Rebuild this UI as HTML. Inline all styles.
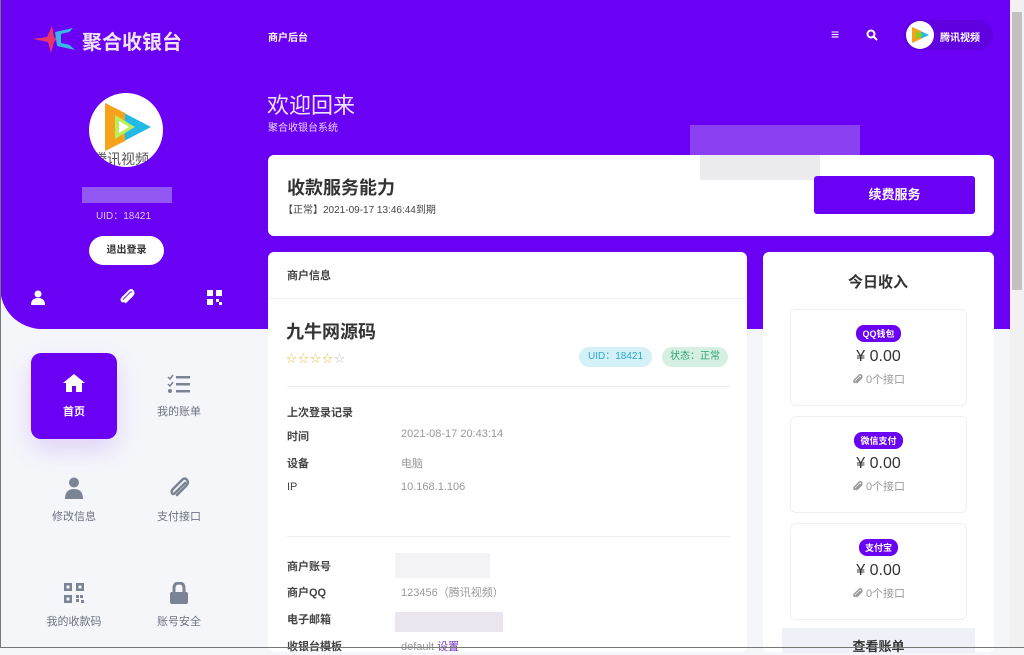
<!DOCTYPE html>
<html><head><meta charset="utf-8"><style>
*{margin:0;padding:0;box-sizing:border-box}
body{width:1024px;height:648px;overflow:hidden;background:#f5f6fa;font-family:"Liberation Sans","Noto Sans CJK SC",sans-serif;position:relative;color:#333}
.a{position:absolute}
.purple{left:0;top:0;width:1010px;height:329px;background:#6a00f4;border-bottom-left-radius:42px}
.card{background:#fff;border-radius:6px}
.t{position:absolute;white-space:nowrap}
.menu .lbl{font-size:11px;color:#6b7280;width:90px;text-align:center}
.inc{position:absolute;left:790px;width:177px;height:97px;background:#fff;border:1px solid #f0f0f3;border-radius:6px;text-align:center}
.inc .b{display:inline-block;margin-top:15px;background:#6a00f4;color:#fff;font-size:9px;padding:2px 6px;border-radius:8px;font-weight:bold}
.inc .m{font-size:16px;color:#333;margin-top:6px}
.inc .n{font-size:11px;color:#999;margin-top:5px}
.inc .n svg{vertical-align:-2px;margin-right:3px}
.lab{font-size:11px;color:#444;font-weight:bold}
.val{font-size:11px;color:#999}
</style></head><body>
<div class="a purple"></div>
<svg class="a" style="left:33px;top:26px" width="44" height="28" viewBox="0 0 44 28"><path d="M0 13 L14 11 L19 0 L21 11 L24 13 L21 16 L18 27 L15 16 Z" fill="#e8356b"/><path d="M22 6 L40 2 L30 13 L42 24 L24 20 Z" fill="#38b6e8"/><path d="M28 8 L36 6 L31 13 L37 19 L28 17 Z" fill="#6a00f4"/></svg>
<div class="t" style="left:82px;top:26px;font-size:20px;color:#efe3f7;font-weight:bold">聚合收银台</div>
<div class="t" style="left:268px;top:29px;font-size:10px;color:#fff;font-weight:bold">商户后台</div>
<div class="t" style="left:831px;top:26px;font-size:14px;color:#fff;font-weight:bold">≡</div>
<svg class="a" style="left:866px;top:29px" width="12" height="12" viewBox="0 0 12 12"><circle cx="5" cy="5" r="3.5" stroke="#fff" stroke-width="2" fill="none"/><path d="M7.5 7.5L11 11" stroke="#fff" stroke-width="2"/></svg>
<div class="a" style="left:903px;top:20px;width:90px;height:30px;border-radius:15px;background:#6000e0"></div>
<div class="a" style="left:906px;top:21px;width:28px;height:28px;border-radius:50%;background:#fff"></div>
<svg class="a" style="left:909px;top:24px" width="22" height="22" viewBox="0 0 22 22"><path d="M3 3 L20 11 L3 19Z" fill="#22b8e8"/><path d="M3 3 L12 7 L12 15 L3 19Z" fill="#f7a21b"/><path d="M7 7 L14 11 L7 15Z" fill="#7ed321"/></svg>
<div class="t" style="left:940px;top:29px;font-size:10px;color:#fff;font-weight:bold">腾讯视频</div>
<div class="a" style="left:89px;top:93px;width:74px;height:74px;border-radius:50%;background:#fff;overflow:hidden">
<svg width="74" height="74" viewBox="0 0 74 74"><path d="M16 10 L62 34 L16 58Z" fill="#22b8e8"/><path d="M16 10 L36 20 L36 48 L16 58Z" fill="#f7a21b"/><path d="M26 22 L46 34 L26 46Z" fill="#b9f05a"/><path d="M30 28 L40 34 L30 40Z" fill="#fff"/></svg>
<div class="t" style="left:4px;top:56px;font-size:14px;color:#555">腾讯视频</div></div>
<div class="a" style="left:82px;top:187px;width:90px;height:16px;background:#9d6ef2;opacity:.8"></div>
<div class="t" style="left:96px;top:207px;font-size:10px;color:#d9c8fb">UID：18421</div>
<div class="a" style="left:89px;top:236px;width:75px;height:29px;border-radius:15px;background:#fff;font-size:10px;color:#333;text-align:center;line-height:29px;font-weight:bold">退出登录</div>
<svg class="a" style="left:31px;top:290px" width="14" height="15" viewBox="0 0 14 15"><circle cx="7" cy="4" r="3.5" fill="#fff"/><path d="M0 15 Q0 8 7 8 Q14 8 14 15Z" fill="#fff"/></svg>
<svg class="a" style="left:119px;top:289px" width="16" height="16" viewBox="0 0 22 22"><path d="M17 6 L7 16 Q5 18 4 16 Q3 14 5 12 L14 3 Q17 0 19 3 Q21 6 18 9 L9 18" stroke="#fff" stroke-width="3" fill="none" stroke-linecap="round"/></svg>
<svg class="a" style="left:207px;top:290px" width="15" height="15" viewBox="0 0 15 15" fill="#fff"><rect x="0" y="0" width="6" height="6"/><rect x="9" y="0" width="6" height="6"/><rect x="0" y="9" width="6" height="6"/><rect x="9" y="9" width="3" height="3"/><rect x="12" y="12" width="3" height="3"/></svg>
<div class="t" style="left:267px;top:88px;font-size:22px;color:#f1e6ff">欢迎回来</div>
<div class="t" style="left:268px;top:119px;font-size:10px;color:#e7d4ff">聚合收银台系统</div>
<div class="a" style="left:690px;top:125px;width:170px;height:30px;background:#9a5cf0;opacity:.7"></div>
<div class="a card" style="left:268px;top:155px;width:726px;height:81px"></div>
<div class="a" style="left:700px;top:155px;width:120px;height:25px;background:#ececef"></div>
<div class="t" style="left:287px;top:174px;font-size:18px;font-weight:bold;color:#333">收款服务能力</div>
<div class="t" style="left:283px;top:201px;font-size:10px;color:#444">【正常】2021-09-17 13:46:44到期</div>
<div class="a" style="left:814px;top:176px;width:161px;height:38px;background:#6a00f4;border-radius:3px;color:#fff;font-size:13px;text-align:center;line-height:38px;font-weight:bold">续费服务</div>
<div class="a card" style="left:268px;top:252px;width:479px;height:400px"></div>
<div class="t" style="left:287px;top:267px;font-size:11px;color:#444;font-weight:bold">商户信息</div>
<div class="a" style="left:268px;top:298px;width:479px;height:1px;background:#f0f0f0"></div>
<div class="t" style="left:286px;top:318px;font-size:18px;font-weight:bold;color:#333">九牛网源码</div>
<div class="t" style="left:286px;top:350px;font-size:11px;color:#e8c660;letter-spacing:1px">☆☆☆☆<span style="color:#ccc">☆</span></div>
<div class="a" style="left:579px;top:347px;width:73px;height:20px;border-radius:10px;background:#d3f1f7;color:#29a6c8;font-size:10px;text-align:center;line-height:20px">UID：18421</div>
<div class="a" style="left:662px;top:347px;width:66px;height:20px;border-radius:10px;background:#d5f0e3;color:#2fa46f;font-size:10px;text-align:center;line-height:20px">状态：正常</div>
<div class="a" style="left:287px;top:386px;width:443px;height:1px;background:#eee"></div>
<div class="t lab" style="left:287px;top:404px">上次登录记录</div>
<div class="t lab" style="left:287px;top:428px">时间</div><div class="t val" style="left:401px;top:428px">2021-08-17 20:43:14</div>
<div class="t lab" style="left:287px;top:455px">设备</div><div class="t val" style="left:401px;top:455px">电脑</div>
<div class="t lab" style="left:287px;top:481px;font-weight:normal">IP</div><div class="t val" style="left:401px;top:481px">10.168.1.106</div>
<div class="a" style="left:287px;top:536px;width:443px;height:1px;background:#eee"></div>
<div class="t lab" style="left:287px;top:558px">商户账号</div><div class="a" style="left:395px;top:553px;width:95px;height:25px;background:#f3f3f5"></div>
<div class="t lab" style="left:287px;top:584px">商户QQ</div><div class="t val" style="left:401px;top:584px">123456（腾讯视频）</div>
<div class="t lab" style="left:287px;top:611px">电子邮箱</div><div class="a" style="left:395px;top:612px;width:108px;height:20px;background:#ebe5f0"></div>
<div class="t lab" style="left:287px;top:638px">收银台模板</div><div class="t val" style="left:401px;top:638px">default <span style="color:#7a3fc0">设置</span></div>
<div class="a card" style="left:763px;top:252px;width:231px;height:400px"></div>
<div class="t" style="left:848px;top:271px;font-size:15px;font-weight:bold;color:#333">今日收入</div>
<div class="inc" style="top:309px"><span class="b">QQ钱包</span><div class="m">¥ 0.00</div><div class="n"><svg width="11" height="11" viewBox="0 0 22 22"><path d="M17 6 L7 16 Q5 18 4 16 Q3 14 5 12 L14 3 Q17 0 19 3 Q21 6 18 9 L9 18" stroke="#999" stroke-width="3" fill="none"/></svg>0个接口</div></div>
<div class="inc" style="top:416px"><span class="b">微信支付</span><div class="m">¥ 0.00</div><div class="n"><svg width="11" height="11" viewBox="0 0 22 22"><path d="M17 6 L7 16 Q5 18 4 16 Q3 14 5 12 L14 3 Q17 0 19 3 Q21 6 18 9 L9 18" stroke="#999" stroke-width="3" fill="none"/></svg>0个接口</div></div>
<div class="inc" style="top:523px"><span class="b">支付宝</span><div class="m">¥ 0.00</div><div class="n"><svg width="11" height="11" viewBox="0 0 22 22"><path d="M17 6 L7 16 Q5 18 4 16 Q3 14 5 12 L14 3 Q17 0 19 3 Q21 6 18 9 L9 18" stroke="#999" stroke-width="3" fill="none"/></svg>0个接口</div></div>
<div class="a" style="left:782px;top:628px;width:193px;height:25px;background:#eef1f8;text-align:center;font-size:13px;font-weight:bold;color:#333;padding-top:8px">查看账单</div>
<div class="a" style="left:31px;top:353px;width:86px;height:86px;border-radius:10px;background:#6a00f4;box-shadow:0 10px 25px rgba(106,0,244,.15)"></div>
<svg class="a" style="left:62px;top:373px" width="24" height="20" viewBox="0 0 24 20"><path d="M12 1 L1 10 L4 10 L4 19 L10 19 L10 13 L14 13 L14 19 L20 19 L20 10 L23 10Z" fill="#fff"/></svg>
<div class="t menu" style="left:29px;top:403px"><div class="lbl" style="color:#fff;font-weight:bold">首页</div></div>
<svg class="a" style="left:167px;top:374px" width="24" height="20" viewBox="0 0 24 20"><g fill="#7b8494"><rect x="9" y="2" width="14" height="2.5"/><rect x="9" y="9" width="14" height="2.5"/><rect x="9" y="16" width="14" height="2.5"/><circle cx="3" cy="17" r="2"/></g><path d="M1 3l2 2 3-4M1 10l2 2 3-4" stroke="#7b8494" stroke-width="1.5" fill="none"/></svg>
<div class="t menu" style="left:134px;top:403px"><div class="lbl">我的账单</div></div>
<svg class="a" style="left:65px;top:477px" width="18" height="22" viewBox="0 0 18 22"><circle cx="9" cy="5.5" r="5" fill="#7b8494"/><path d="M0 22 Q0 12 9 12 Q18 12 18 22Z" fill="#7b8494"/></svg>
<div class="t menu" style="left:29px;top:508px"><div class="lbl">修改信息</div></div>
<svg class="a" style="left:168px;top:477px" width="22" height="22" viewBox="0 0 22 22"><path d="M17 6 L7 16 Q5 18 4 16 Q3 14 5 12 L14 3 Q17 0 19 3 Q21 6 18 9 L9 18" stroke="#7b8494" stroke-width="2.5" fill="none" stroke-linecap="round"/></svg>
<div class="t menu" style="left:134px;top:508px"><div class="lbl">支付接口</div></div>
<svg class="a" style="left:64px;top:583px" width="20" height="20" viewBox="0 0 20 20" fill="#7b8494"><path d="M0 0h8v8H0zM2.5 2.5v3h3v-3zM12 0h8v8h-8zM14.5 2.5v3h3v-3zM0 12h8v8H0zM2.5 14.5v3h3v-3z" fill-rule="evenodd"/><rect x="12" y="12" width="3" height="3"/><rect x="16" y="12" width="3" height="3"/><rect x="12" y="16" width="3" height="3"/><rect x="17" y="17" width="3" height="3"/></svg>
<div class="t menu" style="left:29px;top:613px"><div class="lbl">我的收款码</div></div>
<svg class="a" style="left:169px;top:582px" width="20" height="22" viewBox="0 0 20 22"><path d="M5 10 V6 Q5 1 10 1 Q15 1 15 6 V10" stroke="#7b8494" stroke-width="3" fill="none"/><rect x="1" y="10" width="18" height="12" rx="2" fill="#7b8494"/></svg>
<div class="t menu" style="left:134px;top:613px"><div class="lbl">账号安全</div></div>
<div class="a" style="left:1010px;top:0;width:14px;height:648px;background:#f1f1f1"></div>
<div class="a" style="left:1012px;top:12px;width:10px;height:278px;background:#c1c1c1"></div>
<div class="a" style="left:0;top:0;width:1px;height:648px;background:#777"></div>
<div class="a" style="left:0;top:647px;width:1024px;height:1px;background:#777"></div>
</body></html>
